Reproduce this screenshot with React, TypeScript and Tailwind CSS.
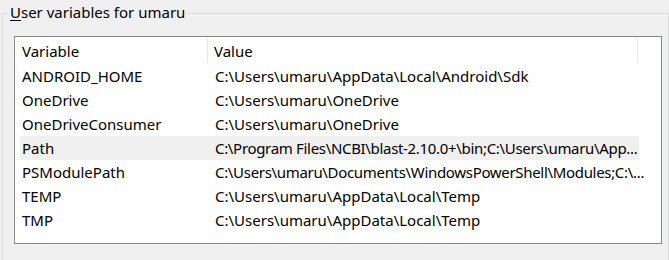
import React from "react";

const rows: [string, string, boolean][] = [
  ["ANDROID_HOME", "C:\\Users\\umaru\\AppData\\Local\\Android\\Sdk", false],
  ["OneDrive", "C:\\Users\\umaru\\OneDrive", false],
  ["OneDriveConsumer", "C:\\Users\\umaru\\OneDrive", false],
  ["Path", "C:\\Program Files\\NCBI\\blast-2.10.0+\\bin;C:\\Users\\umaru\\App...", true],
  ["PSModulePath", "C:\\Users\\umaru\\Documents\\WindowsPowerShell\\Modules;C:\\...", true],
  ["TEMP", "C:\\Users\\umaru\\AppData\\Local\\Temp", false],
  ["TMP", "C:\\Users\\umaru\\AppData\\Local\\Temp", false],
];

export default function App() {
  return (
    <div
      className="w-[669px] h-[260px] bg-[#f0f0f0] text-black text-[15px] overflow-hidden"
      style={{ fontFamily: '"Noto Sans", "Open Sans", sans-serif' }}
    >
      <div className="relative ml-[2px] mt-[13px] h-[260px] border-l border-t border-r border-[#dcdcdc]">
        <div className="absolute left-[5px] top-[-12px] bg-[#f0f0f0] px-[2px] leading-[20px]">
          <span className="underline underline-offset-2">U</span>ser variables for umaru
        </div>
        <div className="ml-[11px] mt-[22px] w-[648px] h-[208px] border border-[#828790] bg-white">
          <div className="flex h-[27px] items-stretch">
            <div className="w-[192px] shrink-0 pl-[7px] flex items-center">
              <span className="leading-[20px]">Variable</span>
            </div>
            <div className="w-px shrink-0 my-[1px] bg-[#e5e5e5]" />
            <div className="w-[429px] shrink-0 pl-[6px] flex items-center">
              <span className="leading-[20px]">Value</span>
            </div>
            <div className="w-px shrink-0 my-[1px] bg-[#e5e5e5]" />
          </div>
          <div className="pl-[5px]">
            {rows.map(([k, v, tight], i) => (
              <div
                key={k}
                className={`flex h-[24px] w-[619px] items-center whitespace-nowrap ${
                  i === 3 ? "bg-[#f0f0f0]" : ""
                }`}
              >
                <div className="w-[188px] shrink-0 pl-[2px] leading-[20px]">{k}</div>
                <div
                  className={`pl-[7px] leading-[20px] min-w-0 ${
                    tight ? "tracking-[-0.32px]" : ""
                  }`}
                >
                  {v}
                </div>
              </div>
            ))}
          </div>
        </div>
      </div>
    </div>
  );
}
